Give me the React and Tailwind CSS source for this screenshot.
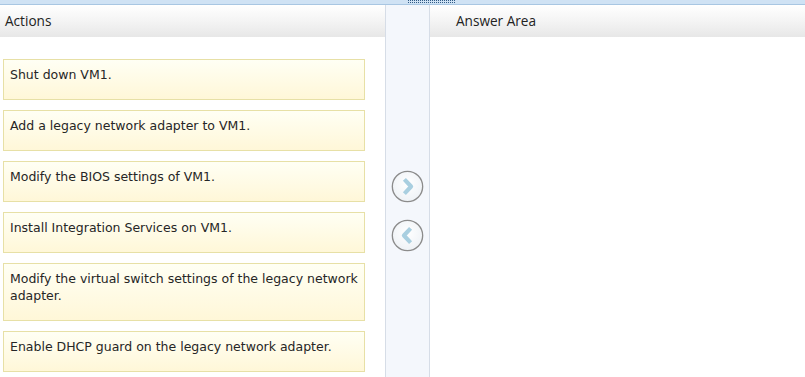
import React from 'react';

const actions = [
  'Shut down VM1.',
  'Add a legacy network adapter to VM1.',
  'Modify the BIOS settings of VM1.',
  'Install Integration Services on VM1.',
  'Modify the virtual switch settings of the legacy network adapter.',
  'Enable DHCP guard on the legacy network adapter.',
];

function Arrow({ dir }) {
  return (
    <svg width="33" height="33" viewBox="0 0 32 32">
      <defs>
        <radialGradient id={`g${dir}`} cx="50%" cy="40%" r="60%">
          <stop offset="0" stopColor="#ffffff" />
          <stop offset="1" stopColor="#eef2f6" />
        </radialGradient>
      </defs>
      <circle cx="16" cy="16" r="14.7" fill={`url(#g${dir})`} stroke="#8c8c8c" strokeWidth="1.3" />
      {dir === 'right'
        ? <path d="M13 9 L19.5 16 L13 23" fill="none" stroke="#a9cfe0" strokeWidth="4" strokeLinejoin="round" />
        : <path d="M19 9 L12.5 16 L19 23" fill="none" stroke="#a9cfe0" strokeWidth="4" strokeLinejoin="round" />}
    </svg>
  );
}

export default function App() {
  return (
    <div className="w-[805px] h-[377px] bg-white overflow-hidden flex flex-col text-[#333]">
      {/* top strip with grip */}
      <div className="h-[5px] shrink-0 bg-[#cfe2f4] border-b border-[#a8c6e2] flex">
        <svg className="ml-[408px]" width="48" height="4">
          <defs>
            <pattern id="dots" width="2" height="2" patternUnits="userSpaceOnUse">
              <rect width="1" height="1" fill="#2f5985" />
            </pattern>
          </defs>
          <rect width="48" height="4" fill="url(#dots)" />
        </svg>
      </div>

      <div className="flex flex-1 min-h-0">
        {/* actions */}
        <div className="w-[385px] shrink-0 flex flex-col">
          <div className="h-[32px] bg-gradient-to-b from-white via-[#f4f4f4] to-[#e7e7e7] flex items-center pl-[5px] font-['Open_Sans',sans-serif] text-[13.6px] text-[#222]">
            Actions
          </div>
          <div className="flex flex-col gap-[10px] pt-[22px] pl-[3px] w-[365px]">
            {actions.map(a => (
              <div key={a} className="border border-[#e7e0a6] bg-gradient-to-b from-[#fffff4] to-[#fff7d8] pl-[6px] pr-[2px] pt-[6px] pb-[16px] font-['DejaVu_Sans',sans-serif] text-[12.5px] leading-[17px] text-[#262626]">
                {a}
              </div>
            ))}
          </div>
        </div>

        {/* move buttons */}
        <div className="w-[45px] shrink-0 bg-[#f4f7fc] border-x border-[#d6dde7] flex flex-col items-center pt-[165px] gap-[16px]">
          <Arrow dir="right" />
          <Arrow dir="left" />
        </div>

        {/* answer area */}
        <div className="flex-1 flex flex-col">
          <div className="h-[32px] bg-gradient-to-b from-white via-[#f4f4f4] to-[#e7e7e7] flex items-center pl-[26px] font-['Open_Sans',sans-serif] text-[13.6px] text-[#222]">
            Answer Area
          </div>
        </div>
      </div>
    </div>
  );
}
